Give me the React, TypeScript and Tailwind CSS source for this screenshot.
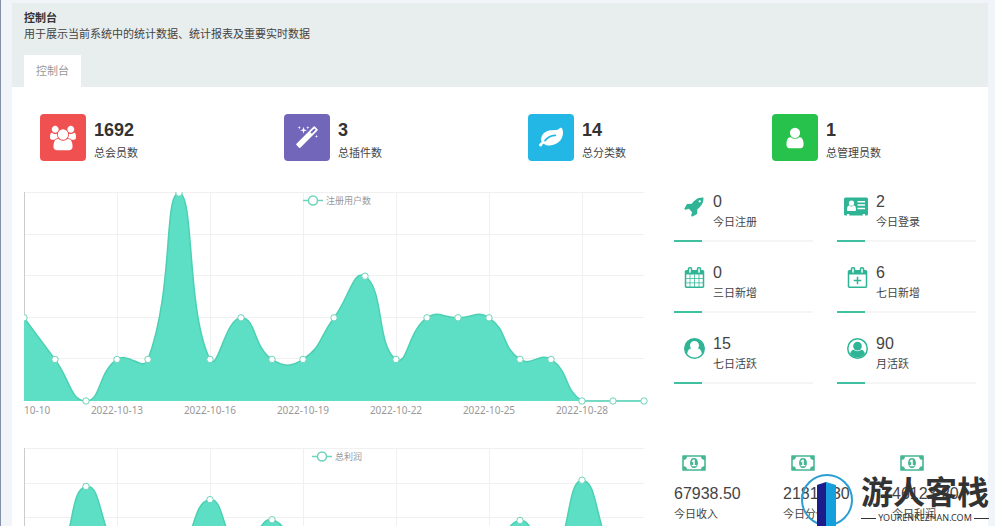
import type { ReactNode } from "react";

type Point = [number, number];

const ICONS = {
  users: {
    viewBox: "-64 0 1920 1792",
    d: "M529 896q-162 5-265 128h-134q-82 0-138-40.5t-56-118.5q0-353 124-353 6 0 43.5 21t97.5 42.5 119 21.5q67 0 133-23-5 37-5 66 0 139 81 256zm1071 637q0 120-73 189.5t-194 69.5h-874q-121 0-194-69.5t-73-189.5q0-53 3.5-103.5t14-109 26.5-108.5 43-97.5 62-81 85.5-53.5 111.5-20q10 0 43 21.5t73 48 107 48 135 21.5 135-21.5 107-48 73-48 43-21.5q61 0 111.5 20t85.5 53.5 62 81 43 97.5 26.5 108.5 14 109 3.5 103.5zm-1024-1277q0 106-75 181t-181 75-181-75-75-181 75-181 181-75 181 75 75 181zm704 384q0 159-112.5 271.5t-271.5 112.5-271.5-112.5-112.5-271.5 112.5-271.5 271.5-112.5 271.5 112.5 112.5 271.5zm576 225q0 78-56 118.5t-138 40.5h-134q-103-123-265-128 81-117 81-256 0-29-5-66 66 23 133 23 59 0 119-21.5t97.5-42.5 43.5-21q124 0 124 353zm-128-609q0 106-75 181t-181 75-181-75-75-181 75-181 181-75 181 75 75 181z",
  },
  magic: {
    viewBox: "0 0 1792 1792",
    d: "M1254 581l293-293-107-107-293 293zm447-293q0 27-18 45l-1286 1286q-18 18-45 18t-45-18l-198-198q-18-18-18-45t18-45l1286-1286q18-18 45-18t45 18l198 198q18 18 18 45zm-1351-190l98 30-98 30-30 98-30-98-98-30 98-30 30-98zm350 162l196 60-196 60-60 196-60-196-196-60 196-60 60-196zm930 478l98 30-98 30-30 98-30-98-98-30 98-30 30-98zm-640-640l98 30-98 30-30 98-30-98-98-30 98-30 30-98z",
  },
  leaf: {
    viewBox: "0 0 1792 1792",
    d: "M1280 704q0-26-19-45t-45-19q-172 0-318 49.5t-259.5 134-235.5 219.5q-19 21-19 45 0 26 19 45t45 19q24 0 45-19 27-24 74-71t67-66q137-124 268.5-176t313.5-52q26 0 45-19t19-45zm512-198q0 95-20 193-46 224-184.5 383t-357.5 268q-214 108-438 108-148 0-286-47-15-5-88-42t-96-37q-16 0-39.5 32t-45 70-52.5 70-60 32q-43 0-63.5-17.5t-45.5-59.5q-2-4-6-11t-5.5-10-3-9.5-1.5-13.5q0-35 31-73.5t68-65.5 68-56 31-48q0-4-14-38t-16-44q-9-51-9-104 0-115 43.5-220t119-184.5 170.5-139 204-95.5q55-18 145-25.5t179.5-9 178.5-6 163.5-24 113.5-56.5l29.5-29.5 29.5-28 27-20 36.5-16 43.5-4.5q39 0 70.5 46t47.5 112 24 124 8 96z",
  },
  user: {
    viewBox: "0 0 1792 1792",
    d: "M1536 1399q0 109-62.5 187t-150.5 78h-854q-88 0-150.5-78t-62.5-187q0-85 8.5-160.5t31.5-152 58.5-131 94-89 134.5-34.5q131 128 313 128t313-128q76 0 134.5 34.5t94 89 58.5 131 31.5 152 8.5 160.5zm-256-887q0 159-112.5 271.5t-271.5 112.5-271.5-112.5-112.5-271.5 112.5-271.5 271.5-112.5 271.5 112.5 112.5 271.5z",
  },
  rocket: {
    viewBox: "0 0 1792 1792",
    d: "M1440 448q0-40-28-68t-68-28-68 28-28 68 28 68 68 28 68-28 28-68zm224-288q0 249-75.5 430.5t-253.5 360.5q-81 80-195 176l-20 379q-2 16-16 26l-384 224q-7 4-16 4-12 0-23-9l-64-64q-13-14-8-32l85-276-281-281-276 85q-3 1-9 1-14 0-23-9l-64-64q-17-19-5-39l224-384q10-14 26-16l379-20q96-114 176-195 188-187 358-258t431-71q14 0 24 9.5t10 22.5z",
  },
  card: {
    viewBox: "0 0 2048 1792",
    d: "M128 128H1920Q2048 128 2048 256V1536Q2048 1664 1920 1664H1792V1536H1600V1664H448V1536H256V1664H128Q0 1664 0 1536V256Q0 128 128 128ZM1024 1199Q1024 820 832 820Q740 905 640 905T448 820Q256 820 256 1199Q256 1280 345 1280H935Q1024 1280 1024 1199ZM640 384A225 225 0 1 0 640 834A225 225 0 1 0 640 384ZM1152 416V544H1792V416ZM1152 704V832H1792V704ZM1152 992V1120H1792V992Z",
  },
  calendar: {
    viewBox: "0 0 1792 1792",
    d: "M192 1664h288v-288h-288v288zm352 0h320v-288h-320v288zm-352-352h288v-320h-288v320zm352 0h320v-320h-320v320zm-352-384h288v-288h-288v288zm736 736h320v-288h-320v288zm-384-736h320v-288h-320v288zm768 736h288v-288h-288v288zm-384-352h320v-320h-320v320zm-352-864v-288q0-13-9.5-22.5t-22.5-9.5h-64q-13 0-22.5 9.5t-9.5 22.5v288q0 13 9.5 22.5t22.5 9.5h64q13 0 22.5-9.5t9.5-22.5zm736 864h288v-320h-288v320zm-384-384h320v-288h-320v288zm384 0h288v-288h-288v288zm32-480v-288q0-13-9.5-22.5t-22.5-9.5h-64q-13 0-22.5 9.5t-9.5 22.5v288q0 13 9.5 22.5t22.5 9.5h64q13 0 22.5-9.5t9.5-22.5zm384-64v1280q0 52-38 90t-90 38h-1408q-52 0-90-38t-38-90v-1280q0-52 38-90t90-38h128v-96q0-66 47-113t113-47h64q66 0 113 47t47 113v96h384v-96q0-66 47-113t113-47h64q66 0 113 47t47 113v96h128q52 0 90 38t38 90z",
  },
  calendarPlus: {
    viewBox: "0 0 1792 1792",
    d: "M1728 384v1280q0 52-38 90t-90 38h-1408q-52 0-90-38t-38-90v-1280q0-52 38-90t90-38h128v-96q0-66 47-113t113-47h64q66 0 113 47t47 113v96h384v-96q0-66 47-113t113-47h64q66 0 113 47t47 113v96h128q52 0 90 38t38 90zM192 640v1024h1408v-1024zM448 160v288q0 32 32 32h64q32 0 32-32v-288q0-32-32-32h-64q-32 0-32 32zM1216 160v288q0 32 32 32h64q32 0 32-32v-288q0-32-32-32h-64q-32 0-32 32zM832 832h128v256h256v128h-256v256h-128v-256h-256v-128h256z",
  },
  userCircle: {
    viewBox: "0 0 1792 1792",
    d: "M896 0A896 896 0 1 0 896 1792A896 896 0 1 0 896 0ZM1523 1339Q1461 928 1200 896Q1070 1024 896 1024T592 896Q331 928 269 1339A768 768 0 0 0 1523 1339ZM896 256A384 384 0 1 0 896 1024A384 384 0 1 0 896 256Z",
  },
  money: {
    viewBox: "0 0 1920 1792",
    d: "M768 1152h384v-96h-128v-448h-114l-148 137 77 80q42-37 55-57h2v288h-128v96zm512-256q0 70-21 142t-59.5 134-101.5 101-138 39-138-39-101.5-101-59.5-134-21-142 21-142 59.5-134 101.5-101 138-39 138 39 101.5 101 59.5 134 21 142zm512 256v-512q-106 0-181-75t-75-181h-1152q0 106-75 181t-181 75v512q106 0 181 75t75 181h1152q0-106 75-181t181-75zm128-832v1152q0 26-19 45t-45 19h-1792q-26 0-45-19t-19-45v-1152q0-26 19-45t45-19h1792q26 0 45 19t19 45z",
  },
};

type IconName = keyof typeof ICONS | "userCircleOutline";

function Icon({ name, className }: { name: IconName; className: string }) {
  if (name === "userCircleOutline") {
    return (
      <svg viewBox="0 0 1792 1792" className={className} fill="currentColor" aria-hidden="true">
        <circle cx="896" cy="896" r="832" fill="none" stroke="currentColor" strokeWidth="128" />
        <circle cx="896" cy="690" r="370" />
        <path d="M269 1339Q331 1040 567 1010Q710 1130 896 1130T1225 1010Q1461 1040 1523 1339A768 768 0 0 1 269 1339Z" />
      </svg>
    );
  }
  const icon = ICONS[name];
  return (
    <svg viewBox={icon.viewBox} className={className} fill="currentColor" fillRule="evenodd" aria-hidden="true">
      <path d={icon.d} />
    </svg>
  );
}

const TOTALS: { icon: IconName; value: string; label: string; color: string; size: string }[] = [
  { icon: "users", value: "1692", label: "总会员数", color: "bg-[#f05050]", size: "h-[26px] w-[26px]" },
  { icon: "magic", value: "3", label: "总插件数", color: "bg-[#7266ba]", size: "h-6 w-6" },
  { icon: "leaf", value: "14", label: "总分类数", color: "bg-[#23b7e5]", size: "h-6 w-6" },
  { icon: "user", value: "1", label: "总管理员数", color: "bg-[#27c24c]", size: "h-6 w-6" },
];

const DAILY: { icon: IconName; value: string; label: string; size: string }[] = [
  { icon: "rocket", value: "0", label: "今日注册", size: "h-[21px] w-[21px]" },
  { icon: "card", value: "2", label: "今日登录", size: "h-[21px] w-6" },
  { icon: "calendar", value: "0", label: "三日新增", size: "h-[21px] w-[21px]" },
  { icon: "calendarPlus", value: "6", label: "七日新增", size: "h-[21px] w-[21px]" },
  { icon: "userCircle", value: "15", label: "七日活跃", size: "h-[21px] w-[21px]" },
  { icon: "userCircleOutline", value: "90", label: "月活跃", size: "h-[21px] w-[21px]" },
];

const INCOME = [
  { value: "67938.50", label: "今日收入" },
  { value: "21814.30", label: "今日分佣" },
  { value: "46123.20", label: "今日利润" },
];

const REGISTERED = [2, 1, 0, 1, 1, 5, 1, 2, 1, 1, 2, 3, 1, 2, 2, 2, 1, 1, 0, 0, 0];
const PROFIT = [
  1.6, 2.5, 4.92, 2.9, 1.4, 2.8, 4.54, 3.1, 3.96, 2.6, 1.6, 1.2, 0.8, 1.4, 1.8, 2.6, 3.94, 2.9, 5.1, 2.9, 1.6,
];
const DATES = ["2022-10-10", "2022-10-13", "2022-10-16", "2022-10-19", "2022-10-22", "2022-10-25", "2022-10-28"];

const STEP = 31;
const PLOT_WIDTH = 620;
const PLOT_HEIGHT = 208;

const clamp = (n: number, min: number, max: number) => Math.min(Math.max(n, min), max);

// Control points follow the chord of the two neighbours and stay in the plot
function smoothPath(points: Point[]) {
  const ys = points.map((p) => p[1]);
  const min = Math.min(...ys);
  const max = Math.max(...ys);
  let out = points[0];
  let d = `M${points[0][0]} ${points[0][1]}`;

  for (let i = 1; i < points.length; i++) {
    const [x, y] = points[i];
    const [px, py] = points[i - 1];
    const next = points[i + 1];
    let cp: Point = [x, y];
    let nextOut: Point = [x, y];
    if (next) {
      const vx = next[0] - px;
      const vy = next[1] - py;
      const prevLen = Math.hypot(x - px, y - py);
      const nextLen = Math.hypot(next[0] - x, next[1] - y);
      const ratio = nextLen / (nextLen + prevLen);
      cp = [x - vx * 0.5 * (1 - ratio), clamp(y - vy * 0.5 * (1 - ratio), min, max)];
      nextOut = [x + vx * 0.5 * ratio, clamp(y + vy * 0.5 * ratio, min, max)];
    }
    d += `C${out[0]} ${out[1]} ${cp[0]} ${cp[1]} ${x} ${y}`;
    out = nextOut;
  }
  return d;
}

type AreaChartProps = {
  title: string;
  legendX: number;
  data: number[];
  max: number;
  labels?: string[];
};

function AreaChart({ title, legendX, data, max, labels = [] }: AreaChartProps) {
  const points = data.map((v, i): Point => [i * STEP, PLOT_HEIGHT - (v / max) * PLOT_HEIGHT + 1]);
  const line = smoothPath(points);
  const rows = Array.from({ length: max + 1 }, (_, i) => Math.round((i * PLOT_HEIGHT) / max) + 0.5);
  const columns = [0, 93, 186, 279, 372, 465, 558];

  return (
    <svg viewBox="0 0 626 232" className="block w-full overflow-hidden" role="img" aria-label={title}>
      {rows.map((y) => (
        <path key={y} d={`M0 ${y}H${PLOT_WIDTH}`} stroke="#f0f0f0" />
      ))}
      {columns.map((x) => (
        <path key={x} d={`M${x + 0.5} 0V${PLOT_HEIGHT}`} stroke={x === 0 ? "#cccccc" : "#f0f0f0"} />
      ))}
      <path d={`${line}L${PLOT_WIDTH} 209L0 209Z`} fill="#5ddfc6" />
      <path d={line} fill="none" stroke="#4cd0b2" strokeWidth="1.5" />
      {points.map(([x, y]) => (
        <circle key={x} cx={x} cy={y} r="3.2" fill="#fff" stroke="#6dd3ba" />
      ))}
      {labels.map((label, i) => (
        <text
          key={label}
          x={columns[i]}
          y="222"
          textAnchor="middle"
          fill="#999999"
          className="font-['Noto_Sans',sans-serif] text-[10px]"
        >
          {label}
        </text>
      ))}
      <path d={`M${legendX} 8.5h20`} stroke="#6dd3ba" strokeWidth="1.5" />
      <circle cx={legendX + 10} cy="8.5" r="4.5" fill="#fff" stroke="#6dd3ba" strokeWidth="1.5" />
      <text x={legendX + 23} y="12" fill="#999999" className="text-[9px]">
        {title}
      </text>
    </svg>
  );
}

function Split({ children }: { children: ReactNode }) {
  return <div className="grid grid-cols-[626fr_302fr] gap-6 px-3">{children}</div>;
}

function Watermark() {
  return (
    <div className="absolute right-[6px] bottom-0 flex items-start gap-2">
      <svg viewBox="0 0 52 52" className="h-[52px] w-[52px]" aria-hidden="true">
        <circle cx="26" cy="26" r="25" fill="none" stroke="#2b9fd4" strokeWidth="2" />
        <path d="M16 11L25 8V52H16Z" fill="#1d1c8c" />
        <path d="M25 8L35 11V52H25Z" fill="#159fdc" />
      </svg>
      <div className="flex flex-col items-center text-[#333]">
        <span className="text-[32px] leading-[38px] font-bold">游人客栈</span>
        <span className="flex w-full items-center gap-[2px] font-['Noto_Sans',sans-serif] text-[9px] leading-3">
          <span className="h-px flex-1 bg-[#333]" />
          YOURENKEZHAN.COM
          <span className="h-px flex-1 bg-[#333]" />
        </span>
      </div>
    </div>
  );
}

export default function App() {
  return (
    <div className="relative h-screen overflow-hidden border-l border-[#8492a6] bg-[#f1f4f8] pt-[3px] pl-[11px] font-['Liberation_Sans','Noto_Sans_CJK_SC',sans-serif] text-[11px] text-[#444]">
      <header className="mr-[7px] bg-[#e8edee] px-3 pt-[7px]">
        <h1 className="leading-4 font-bold text-[#333]">控制台</h1>
        <p className="leading-4">用于展示当前系统中的统计数据、统计报表及重要实时数据</p>
        <nav className="mt-[13px] flex">
          <a href="#dashboard" className="bg-white px-3 py-2 leading-4 text-[#999]">
            控制台
          </a>
        </nav>
      </header>

      <main id="dashboard" className="mr-[7px] bg-white pt-[27px]">
        <section className="grid grid-cols-4">
          {TOTALS.map((item) => (
            <div key={item.label} className="flex gap-2 pl-7">
              <span className={`flex h-[47px] w-[46px] items-center justify-center rounded text-white ${item.color}`}>
                <Icon name={item.icon} className={item.size} />
              </span>
              <div className="pt-1">
                <div className="text-lg leading-6 font-bold text-[#333]">{item.value}</div>
                <div className="leading-[22px]">{item.label}</div>
              </div>
            </div>
          ))}
        </section>

        <div className="pt-7">
          <Split>
            <AreaChart title="注册用户数" legendX={279} data={REGISTERED} max={5} labels={DATES} />
            <div className="grid grid-cols-2 content-start gap-x-6">
              {DAILY.map((item) => (
                <div key={item.label} className="h-[71px]">
                  <div className="flex h-12 gap-2">
                    <span className="flex w-[31px] justify-end pt-1 text-[#2fb596]">
                      <Icon name={item.icon} className={item.size} />
                    </span>
                    <div>
                      <div className="text-base leading-5">{item.value}</div>
                      <div className="leading-5">{item.label}</div>
                    </div>
                  </div>
                  <div className="h-[2px] bg-[#f5f5f5]">
                    <div className="h-full w-1/5 bg-[#3fc0a0]" />
                  </div>
                </div>
              ))}
            </div>
          </Split>
        </div>

        <div className="pt-6">
          <Split>
            <AreaChart title="总利润" legendX={288} data={PROFIT} max={6} />
            <div className="grid grid-cols-[109fr_109fr_84fr] content-start pt-1">
              {INCOME.map((item) => (
                <div key={item.label}>
                  <Icon name="money" className="ml-2 h-[22px] w-6 text-[#45b592]" />
                  <div className="pt-2 text-base leading-6">{item.value}</div>
                  <div className="leading-4">{item.label}</div>
                </div>
              ))}
            </div>
          </Split>
        </div>
      </main>

      <Watermark />
    </div>
  );
}
